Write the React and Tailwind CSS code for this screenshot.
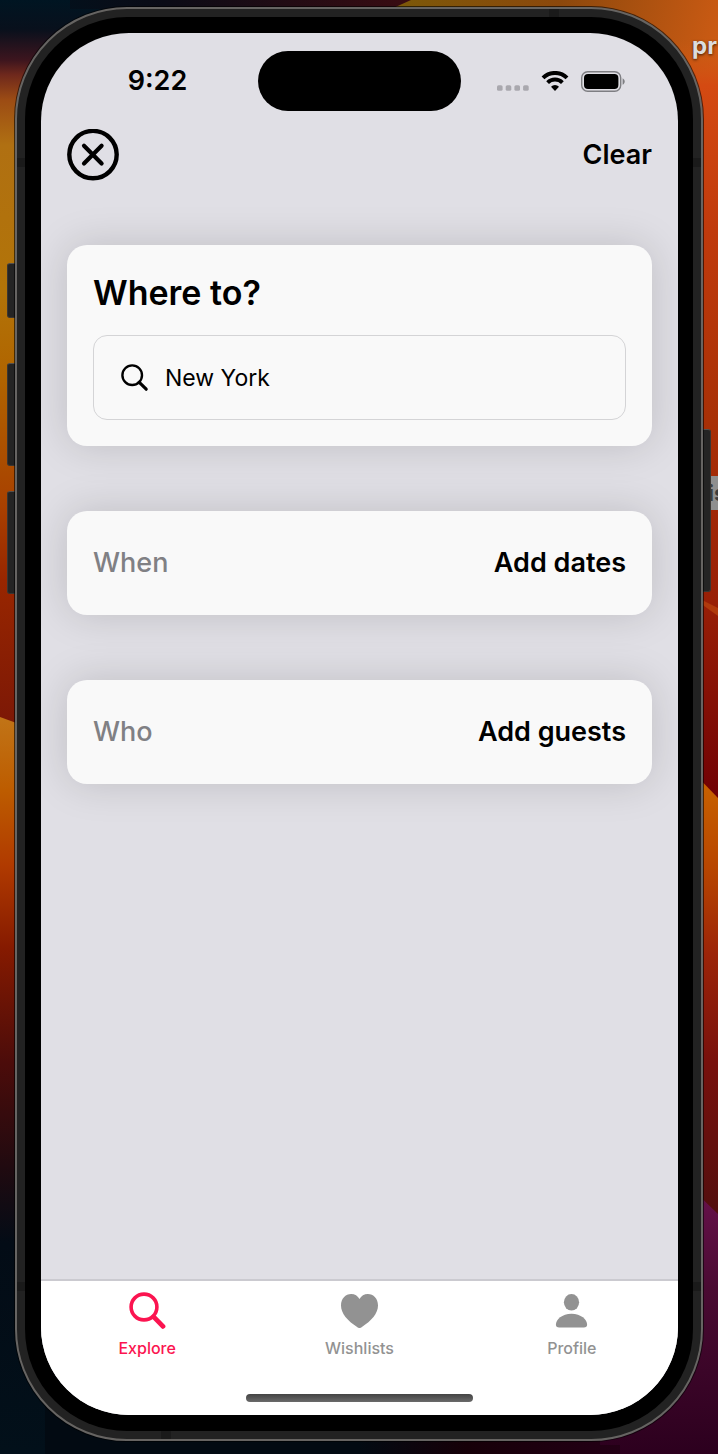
import React from "react";

function Wallpaper() {
  return (
    <svg
      className="absolute inset-0 -z-10 h-full w-full"
      viewBox="0 0 718 1454"
      preserveAspectRatio="none"
      aria-hidden="true"
    >
      <defs>
        <linearGradient id="top" x1="0" y1="0" x2="410" y2="0" gradientUnits="userSpaceOnUse">
          <stop offset="0" stopColor="#00131f" />
          <stop offset="0.4" stopColor="#0a0b16" />
          <stop offset="1" stopColor="#3a0c12" />
        </linearGradient>
        <linearGradient id="left" x1="0" y1="0" x2="0" y2="725" gradientUnits="userSpaceOnUse">
          <stop offset="0" stopColor="#001522" />
          <stop offset="0.04" stopColor="#08101c" />
          <stop offset="0.083" stopColor="#3d151e" />
          <stop offset="0.103" stopColor="#6e281c" />
          <stop offset="0.138" stopColor="#9c4c14" />
          <stop offset="0.2" stopColor="#b07012" />
          <stop offset="0.4" stopColor="#b27408" />
          <stop offset="0.52" stopColor="#b06400" />
          <stop offset="0.7" stopColor="#a84000" />
          <stop offset="0.8" stopColor="#982600" />
          <stop offset="1" stopColor="#7c1806" />
        </linearGradient>
        <linearGradient id="leftLow" x1="0" y1="700" x2="0" y2="1454" gradientUnits="userSpaceOnUse">
          <stop offset="0" stopColor="#c27a1c" />
          <stop offset="0.12" stopColor="#bd5c00" />
          <stop offset="0.22" stopColor="#b03a00" />
          <stop offset="0.33" stopColor="#851a00" />
          <stop offset="0.48" stopColor="#4c0c0a" />
          <stop offset="0.62" stopColor="#200a10" />
          <stop offset="0.72" stopColor="#030c16" />
          <stop offset="1" stopColor="#02101a" />
        </linearGradient>
        <linearGradient id="amber" x1="380" y1="0" x2="718" y2="90" gradientUnits="userSpaceOnUse">
          <stop offset="0" stopColor="#7a5a08" />
          <stop offset="0.5" stopColor="#8c480c" />
          <stop offset="1" stopColor="#d05c14" />
        </linearGradient>
        <linearGradient id="right" x1="0" y1="40" x2="0" y2="800" gradientUnits="userSpaceOnUse">
          <stop offset="0" stopColor="#d05c14" stopOpacity="0" />
          <stop offset="0.06" stopColor="#d44a12" />
          <stop offset="0.25" stopColor="#c03a0c" />
          <stop offset="0.5" stopColor="#a83006" />
          <stop offset="0.74" stopColor="#981f06" />
          <stop offset="1" stopColor="#700004" />
        </linearGradient>
        <linearGradient id="rightLow" x1="0" y1="780" x2="0" y2="1215" gradientUnits="userSpaceOnUse">
          <stop offset="0" stopColor="#c86200" />
          <stop offset="0.2" stopColor="#b84600" />
          <stop offset="0.4" stopColor="#9c2408" />
          <stop offset="0.65" stopColor="#78100c" />
          <stop offset="1" stopColor="#520e0e" />
        </linearGradient>
        <linearGradient id="plum" x1="0" y1="1200" x2="0" y2="1454" gradientUnits="userSpaceOnUse">
          <stop offset="0" stopColor="#641048" />
          <stop offset="0.35" stopColor="#4a0a32" />
          <stop offset="1" stopColor="#2c001e" />
        </linearGradient>
        <linearGradient id="base" x1="359" y1="0" x2="718" y2="0" gradientUnits="userSpaceOnUse">
          <stop offset="0" stopColor="#020a12" />
          <stop offset="0.3" stopColor="#160008" />
          <stop offset="1" stopColor="#2c001e" />
        </linearGradient>
      </defs>
      <rect width="718" height="1454" fill="#02080f" />
      <rect width="160" height="730" fill="url(#left)" />
      <path d="M0 717L60 739V1454H0Z" fill="url(#leftLow)" />
      <path d="M70 0H420V9H70Z" fill="url(#top)" />
      <path d="M411 0H718V140H340V32Z" fill="url(#amber)" />
      <path d="M660 40H718V800H660Z" fill="url(#right)" />
      <path d="M700 599L718 608V616L700 603Z" fill="#b03a0c" />
      <path d="M660 738L718 798V1220H660Z" fill="url(#rightLow)" />
      <rect x="45" y="1400" width="673" height="54" fill="url(#base)" />
      <path d="M600 1100L718 1214V1454H600Z" fill="url(#plum)" />
      <path d="M45 1445H620V1454H45Z" fill="url(#base)" />
    </svg>
  );
}

function CloseIcon() {
  return (
    <svg className="size-[52px]" viewBox="0 0 52 52" fill="none" stroke="currentColor" aria-hidden="true">
      <circle cx="26" cy="25.6" r="23.7" strokeWidth="4.4" />
      <path d="M17 16.7L34.6 34.4M34.6 16.7L17 34.4" strokeWidth="4.2" strokeLinecap="round" />
    </svg>
  );
}

function WifiIcon() {
  return (
    <svg className="h-[20px] w-[28px]" viewBox="0 0 28 20" fill="none" aria-hidden="true">
      <path d="M2 6.9A17 17 0 0 1 26 6.9" stroke="#000" strokeWidth="4" />
      <path d="M6.6 11.6A10.5 10.5 0 0 1 21.4 11.6" stroke="#000" strokeWidth="3.9" />
      <path d="M14 20L10 15.8A5.6 5.6 0 0 1 18 15.8Z" fill="#000" />
    </svg>
  );
}

function BatteryIcon() {
  return (
    <svg className="h-[21px] w-[44px]" viewBox="0 0 44 21" fill="none" aria-hidden="true">
      <rect x="0.7" y="0.7" width="39" height="19.6" rx="6" stroke="#7e7e82" strokeWidth="1.4" />
      <rect x="3" y="3" width="34.4" height="15" rx="4" fill="#000" />
      <path d="M41.6 7.2C44.4 8.6 44.4 12.4 41.6 13.8Z" fill="#7e7e82" />
    </svg>
  );
}

function DotsIcon() {
  return (
    <svg className="h-[20px] w-[32px]" viewBox="0 0 32 20" fill="#a9a8ae" aria-hidden="true">
      <rect x="0" y="14.2" width="5.6" height="5.6" rx="1.6" />
      <rect x="8.7" y="14.2" width="5.6" height="5.6" rx="1.6" />
      <rect x="17.4" y="14.2" width="5.6" height="5.6" rx="1.6" />
      <rect x="26.1" y="14.2" width="5.6" height="5.6" rx="1.6" />
    </svg>
  );
}

function SearchIcon() {
  return (
    <svg className="size-[28px] shrink-0" viewBox="0 0 28 28" fill="none" stroke="currentColor" aria-hidden="true">
      <circle cx="11.2" cy="11.2" r="9.8" strokeWidth="2.4" />
      <path d="M18.3 18.3L25.2 25.2" strokeWidth="3.2" strokeLinecap="round" />
    </svg>
  );
}

function ExploreIcon() {
  return (
    <svg className="size-[37px]" viewBox="0 0 37 37" fill="none" stroke="currentColor" aria-hidden="true">
      <circle cx="15" cy="15" r="12.9" strokeWidth="3.6" />
      <path d="M25.2 25.4L34 34.4" strokeWidth="4.8" strokeLinecap="round" />
    </svg>
  );
}

function HeartIcon() {
  return (
    <svg className="size-[37px]" viewBox="0 0 37 37" fill="currentColor" aria-hidden="true">
      <path d="M18.5 36C17.8 36 16.9 35.4 16.1 34.9C6.6 28.7 0 21.4 0 13.4C0 6.7 4.5 2 10.2 2C13.8 2 16.8 3.9 18.5 7C20.2 3.9 23.2 2 26.8 2C32.5 2 37 6.7 37 13.4C37 21.4 30.4 28.7 20.9 34.9C20.1 35.4 19.2 36 18.5 36Z" />
    </svg>
  );
}

function PersonIcon() {
  return (
    <svg className="size-[37px]" viewBox="0 0 37 37" fill="currentColor" aria-hidden="true">
      <ellipse cx="18.5" cy="10.3" rx="7.6" ry="8.3" />
      <path d="M6.2 35.4C4 35.4 2.9 34.4 2.9 32.7C2.9 27.7 9 21.8 18.5 21.8C28 21.8 34.1 27.7 34.1 32.7C34.1 34.4 33 35.4 30.8 35.4Z" />
    </svg>
  );
}

const tabs = [
  { label: "Explore", Icon: ExploreIcon, tone: "text-[#fb1450]" },
  { label: "Wishlists", Icon: HeartIcon, tone: "text-[#929292]" },
  { label: "Profile", Icon: PersonIcon, tone: "text-[#929292]" },
];

const cardClass = "rounded-[20px] bg-[#f9f9f9] shadow-[0_0_40px_rgba(0,0,0,0.15)]";

function CollapsedCard({ title, action }) {
  return (
    <button type="button" className={`${cardClass} flex w-full items-center justify-between p-[26px] text-[27px] leading-[52px]`}>
      <span className="font-medium text-[#808084]">{title}</span>
      <span className="font-semibold">{action}</span>
    </button>
  );
}

function StatusBar() {
  return (
    <div className="grid grid-cols-[1fr_203px_1fr] items-center pt-[18px]">
      <time className="pl-4 text-center text-[27px] leading-[60px] font-semibold">9:22</time>
      <div className="h-[60px] rounded-full bg-black" />
      <div className="flex items-center justify-center gap-3 pr-[18px]">
        <DotsIcon />
        <WifiIcon />
        <BatteryIcon />
      </div>
    </div>
  );
}

function Hardware() {
  const key = "absolute -z-10 border border-[#3a3632] border-t-[#55504c] bg-[#242424]";
  const band = "absolute bg-[#1a1a1a]";
  return (
    <>
      <span className={`${key} top-[254px] -left-[10px] h-[55px] w-[16px] rounded-l-[3px]`} />
      <span className={`${key} top-[354px] -left-[10px] h-[103px] w-[16px] rounded-l-[3px]`} />
      <span className={`${key} top-[482px] -left-[10px] h-[103px] w-[16px] rounded-l-[3px]`} />
      <span className={`${key} top-[420px] -right-[10px] h-[163px] w-[16px] rounded-r-[3px]`} />
      <span className={`${band} top-[149px] left-0 h-[9px] w-[8px]`} />
      <span className={`${band} top-[149px] right-0 h-[9px] w-[8px]`} />
      <span className={`${band} bottom-[148px] left-0 h-[9px] w-[8px]`} />
      <span className={`${band} right-0 bottom-[148px] h-[9px] w-[8px]`} />
      <span className={`${band} top-0 right-[142px] h-[8px] w-[10px]`} />
      <span className={`${band} bottom-0 left-[144px] h-[8px] w-[10px]`} />
    </>
  );
}

export default function App() {
  return (
    <div className="relative isolate flex min-h-screen flex-col overflow-hidden px-[15px] pt-[7px] pb-[13px] font-['Inter','Liberation_Sans',sans-serif] text-black">
      <Wallpaper />
      <span className="absolute top-[33px] left-[calc(100%-26px)] text-[24px] leading-[26px] font-bold text-[#dcdcdc] [text-shadow:0_1px_3px_rgba(0,0,0,0.7)]">
        pr
      </span>
      <span className="absolute top-[476px] left-[calc(100%-15px)] -z-10 bg-[#8f8f8f] pl-[5px] text-[22px] leading-[34px] font-bold text-[#3c3c3c]">
        is
      </span>

      <div className="relative flex flex-1 flex-col rounded-[112px] border-2 border-[#666462] bg-[#222222] p-[8px] shadow-[0_0_0_1px_rgba(0,0,0,0.6)]">
        <Hardware />
        <div className="relative flex flex-1 flex-col rounded-[102px] bg-black py-[16px] pr-[15px] pl-[16px]">
          <div className="flex flex-1 flex-col overflow-hidden rounded-[88px] bg-[#e0dfe5]">
            <StatusBar />

            <main className="flex flex-1 flex-col px-[26px] pt-[18px]">
              <header className="mb-[64px] flex items-center justify-between">
                <button type="button" aria-label="Close">
                  <CloseIcon />
                </button>
                <button type="button" className="text-[27px] leading-[52px] font-semibold">
                  Clear
                </button>
              </header>

              <div className="flex flex-col gap-[65px]">
                <section className={`${cardClass} p-[26px]`}>
                  <h1 className="mb-[20px] text-[34px] leading-[44px] font-semibold">Where to?</h1>
                  <label className="flex h-[85px] items-center gap-4 rounded-[14px] border border-[#d4d4d6] px-[27px]">
                    <SearchIcon />
                    <input
                      type="text"
                      aria-label="Search destinations"
                      defaultValue="New York"
                      className="w-full min-w-0 bg-transparent text-[23px] leading-[32px] outline-none"
                    />
                  </label>
                </section>
                <CollapsedCard title="When" action="Add dates" />
                <CollapsedCard title="Who" action="Add guests" />
              </div>
            </main>

            <nav className="border-t-2 border-[#cbcad0] bg-white pt-[11px] pb-[13px]">
              <div className="mb-[36px] grid grid-cols-3">
                {tabs.map(({ label, Icon, tone }) => (
                  <a key={label} href="#" className={`${tone} flex flex-col items-center gap-[9px] text-[16px] leading-[20px] font-medium`}>
                    <Icon />
                    {label}
                  </a>
                ))}
              </div>
              <div className="mx-auto h-[8px] w-[227px] rounded-full bg-linear-to-b from-[#444] to-[#6a6a6a]" />
            </nav>
          </div>
        </div>
      </div>
    </div>
  );
}
